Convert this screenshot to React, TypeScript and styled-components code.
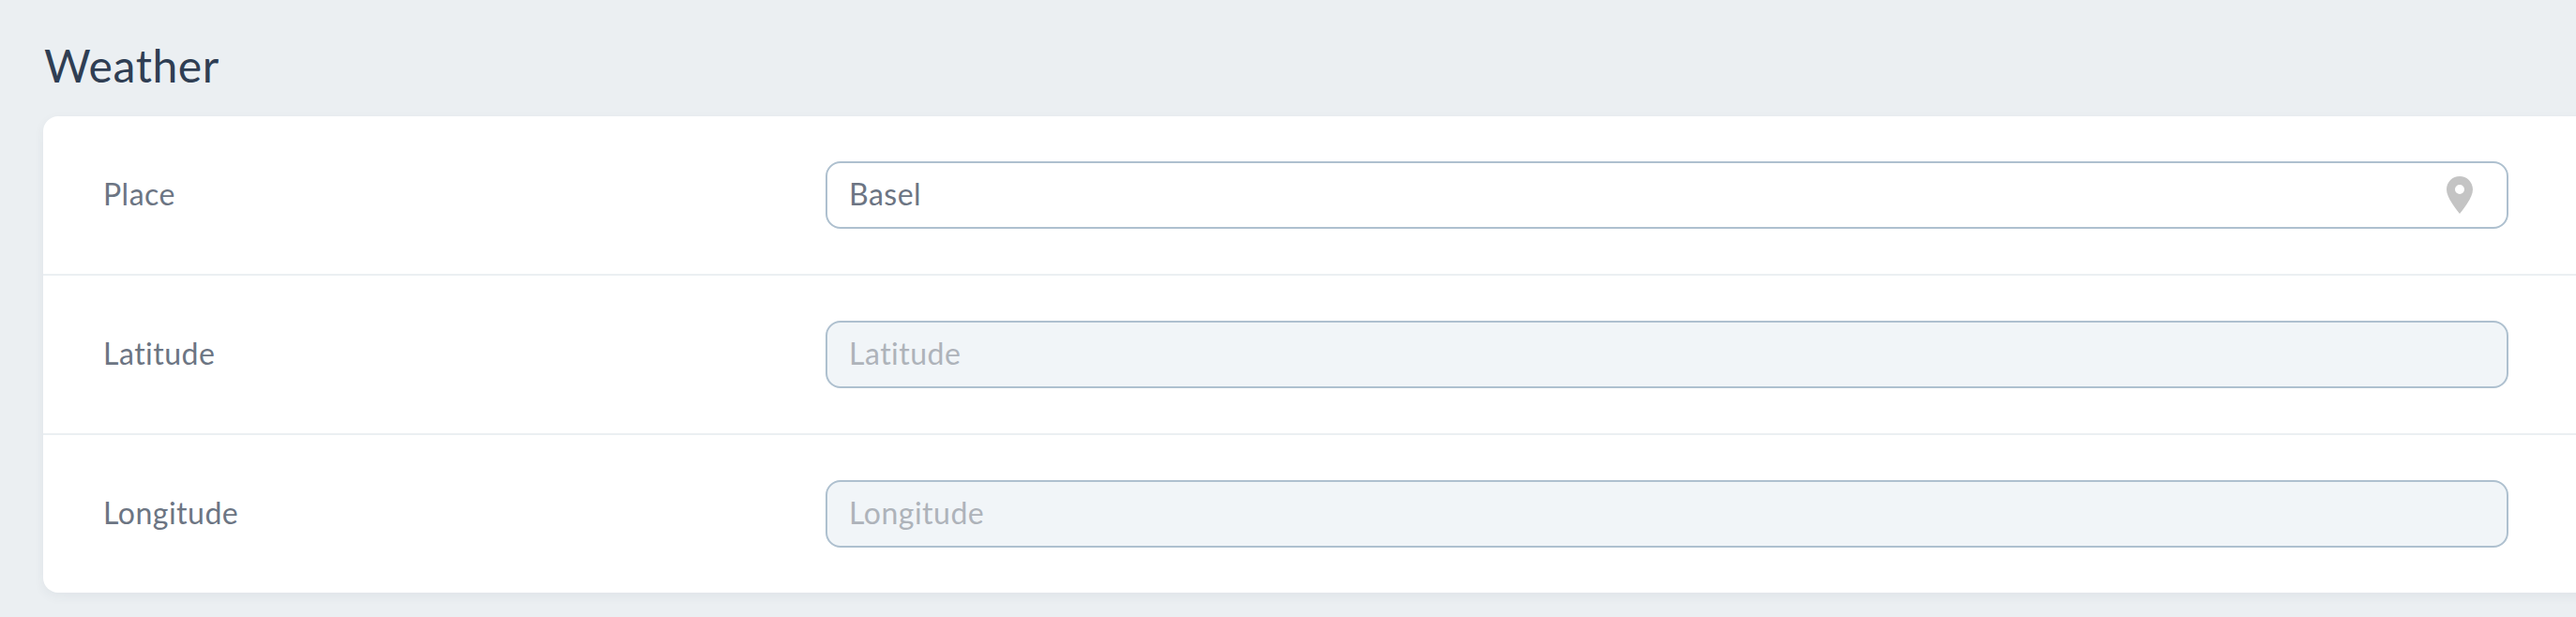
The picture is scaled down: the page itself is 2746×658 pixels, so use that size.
import React, { FC } from 'react';
import styled, { createGlobalStyle } from 'styled-components';

const GlobalStyle = createGlobalStyle`
  html, body {
    margin: 0;
    padding: 0;
    height: 100%;
    overflow: hidden;
    background-color: #ebeff2;
    font-family: "Lato", "Noto Sans", sans-serif;
  }
`;

const Page = styled.div`
  padding: 40px 0 0 46px;
  height: 658px;
  box-sizing: border-box;
`;

const Title = styled.h1`
  margin: 0 0 20px 1px;
  height: 64px;
  line-height: 60px;
  font-size: 48px;
  font-weight: 400;
  letter-spacing: 0.6px;
  color: #2f3e53;
`;

const Card = styled.div`
  width: 2730px;
  background-color: #fff;
  border-radius: 16px;
  box-shadow: 0 4px 12px rgba(45, 62, 83, 0.06);
`;

const Row = styled.div`
  display: grid;
  grid-template-columns: 770px 1794px;
  align-items: center;
  padding: 48px 0 48px 64px;
  border-bottom: 2px solid #ebeff2;

  &:last-child {
    border-bottom: 0;
  }
`;

const Label = styled.label`
  padding-bottom: 3px;
  font-size: 32px;
  letter-spacing: 0.5px;
  color: #6c7583;
`;

const InputWrap = styled.div`
  position: relative;
`;

const Input = styled.input<{ $muted?: boolean }>`
  display: block;
  width: 100%;
  height: 72px;
  box-sizing: border-box;
  padding: 0 23px 3px;
  border: 2px solid #aec0cf;
  border-radius: 16px;
  outline: none;
  font-family: inherit;
  font-size: 32px;
  letter-spacing: 0.5px;
  color: #6c7583;
  background-color: ${(p) => (p.$muted ? '#f1f5f8' : '#fff')};

  &::placeholder {
    color: #aeb3ba;
    opacity: 1;
  }
`;

const PinIcon = styled.svg`
  position: absolute;
  top: 16px;
  right: 38px;
  width: 28px;
  height: 40px;
`;

const Pin: FC = () => (
  <PinIcon viewBox="0 0 28 40">
    <path
      fill="#c4c4c4"
      fillRule="evenodd"
      d="M14 0C6.300 0 0 6.200 0 14c0 9 10 20.500 14 26 4-5.500 14-17 14-26C28 6.200 21.700 0 14 0zm0 9a5 5 0 1 1 0 10 5 5 0 0 1 0-10z"
    />
  </PinIcon>
);

const App: FC = () => (
  <Page>
    <GlobalStyle />
    <Title>Weather</Title>
    <Card>
      <Row>
        <Label>Place</Label>
        <InputWrap>
          <Input defaultValue="Basel" />
          <Pin />
        </InputWrap>
      </Row>
      <Row>
        <Label>Latitude</Label>
        <InputWrap>
          <Input $muted placeholder="Latitude" readOnly />
        </InputWrap>
      </Row>
      <Row>
        <Label>Longitude</Label>
        <InputWrap>
          <Input $muted placeholder="Longitude" readOnly />
        </InputWrap>
      </Row>
    </Card>
  </Page>
);

export default App;
